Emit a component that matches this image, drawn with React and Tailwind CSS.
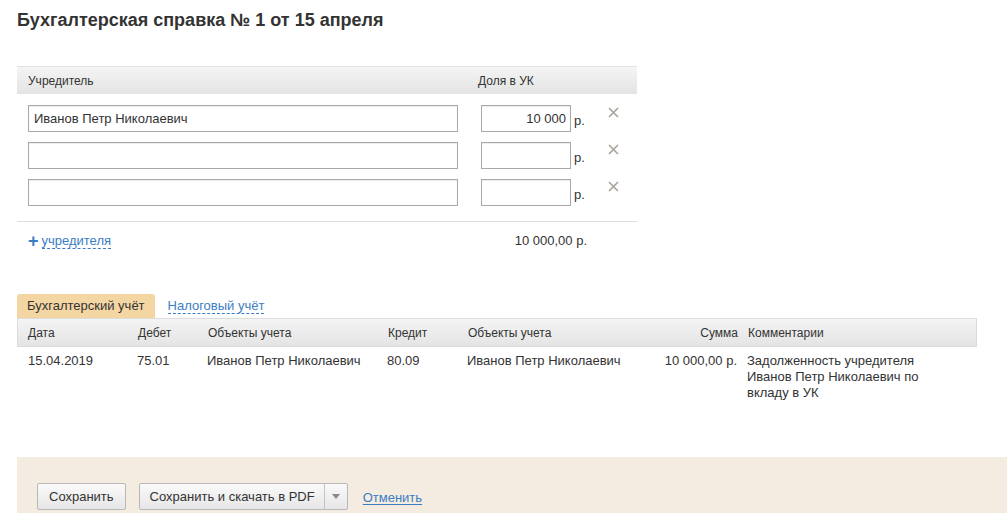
import React from "react";

const founders = [
  { name: "Иванов Петр Николаевич", share: "10 000" },
  { name: "", share: "" },
  { name: "", share: "" },
];

const CloseIcon = () => (
  <svg width="11" height="11" viewBox="0 0 11 11" className="block">
    <path d="M1 1 L10 10 M10 1 L1 10" stroke="#a8a29a" strokeWidth="1.6" />
  </svg>
);

const App = () => {
  return (
    <div className="w-[1007px] h-[513px] overflow-hidden bg-white text-[#333] font-['Liberation_Sans',Arial,sans-serif]">
      <div className="pl-[17px]">
        <h1 className="pt-[9px] text-[18px] leading-[22px] font-bold text-[#333]">
          Бухгалтерская справка № 1 от 15 апреля
        </h1>

        {/* founders */}
        <div className="mt-[35px] w-[620px]">
          <div className="h-[28px] flex items-center text-[12px] bg-gradient-to-b from-[#f4f4f4] to-[#e4e4e4] border-t border-[#e2e2e2]">
            <div className="w-[461px] pl-[11px]">Учредитель</div>
            <div>Доля в УК</div>
          </div>
          <div className="pt-[11px] pb-[15px] flex flex-col gap-[10px] border-b border-[#dedede]">
            {founders.map((f, i) => (
              <div key={i} className="flex items-start">
                <input
                  readOnly
                  value={f.name}
                  className="ml-[11px] w-[430px] h-[27px] border border-[#a9a9a9] px-[5px] text-[13px] text-[#333] outline-none shadow-[inset_0_1px_1px_rgba(0,0,0,0.08)]"
                />
                <input
                  readOnly
                  value={f.share}
                  className="ml-[23px] w-[90px] h-[27px] border border-[#a9a9a9] px-[4px] text-right text-[13px] text-[#333] outline-none shadow-[inset_0_1px_1px_rgba(0,0,0,0.08)]"
                />
                <span className="ml-[3px] mt-[6px] text-[13px]">р.</span>
                <span className="ml-[23px] mt-[2px]">
                  <CloseIcon />
                </span>
              </div>
            ))}
          </div>
          <div className="h-[38px] flex items-center text-[13px]">
            <div className="w-[461px] pl-[11px] flex items-center">
              <span className="text-[#3b7dc4] text-[18px] font-bold leading-none mr-[3px]">+</span>
              <span className="text-[#3b7dc4] border-b border-dashed border-[#3b7dc4] leading-[15px]">
                учредителя
              </span>
            </div>
            <div className="w-[109px] text-right">10 000,00 р.</div>
          </div>
        </div>

        {/* tabs */}
        <div className="mt-[34px] flex items-end text-[13px]">
          <div className="h-[24px] px-[10px] flex items-center bg-[#f4d6a2] rounded-t-[3px]">
            Бухгалтерский учёт
          </div>
          <div className="ml-[13px] h-[24px] flex items-center">
            <span className="text-[#3b7dc4] border-b border-dashed border-[#3b7dc4] leading-[15px]">
              Налоговый учёт
            </span>
          </div>
        </div>
        <div className="w-[960px]">
          <div className="h-[29px] flex items-center text-[12px] bg-gradient-to-b from-[#f4f4f4] to-[#e4e4e4] border border-[#dcdcdc]">
            <div className="w-[120px] pl-[10px]">Дата</div>
            <div className="w-[70px]">Дебет</div>
            <div className="w-[180px]">Объекты учета</div>
            <div className="w-[80px]">Кредит</div>
            <div className="w-[150px]">Объекты учета</div>
            <div className="w-[120px] text-right">Сумма</div>
            <div className="pl-[10px]">Комментарии</div>
          </div>
          <div className="flex items-start pt-[6px] text-[13px] leading-[16px]">
            <div className="w-[120px] pl-[11px]">15.04.2019</div>
            <div className="w-[70px]">75.01</div>
            <div className="w-[180px] whitespace-nowrap">Иванов Петр Николаевич</div>
            <div className="w-[80px]">80.09</div>
            <div className="w-[150px] whitespace-nowrap">Иванов Петр Николаевич</div>
            <div className="w-[120px] text-right">10 000,00 р.</div>
            <div className="pl-[10px] w-[190px]">
              Задолженность учредителя Иванов Петр Николаевич по вкладу в УК
            </div>
          </div>
        </div>

        {/* footer */}
        <div className="mt-[56px] h-[60px] bg-[#f4ece0] pl-[20px] pt-[26px] flex items-start text-[13px]">
          <button className="h-[27px] px-[11px] border border-[#b8b8b8] rounded-[2px] bg-gradient-to-b from-[#fafafa] to-[#e6e6e6] text-[#333]">
            Сохранить
          </button>
          <div className="ml-[13px] h-[27px] flex border border-[#b8b8b8] rounded-[2px] bg-gradient-to-b from-[#fafafa] to-[#e6e6e6]">
            <button className="pl-[10px] pr-[9px] text-[#333] border-r border-[#c4c4c4]">
              Сохранить и скачать в PDF
            </button>
            <button className="w-[22px] flex items-center justify-center">
              <svg width="8" height="5" viewBox="0 0 8 5">
                <path d="M0 0 L8 0 L4 5 Z" fill="#888" />
              </svg>
            </button>
          </div>
          <a className="ml-[15px] mt-[5px] text-[#3b7dc4] underline underline-offset-2">
            Отменить
          </a>
        </div>
      </div>
    </div>
  );
};

export default App;
